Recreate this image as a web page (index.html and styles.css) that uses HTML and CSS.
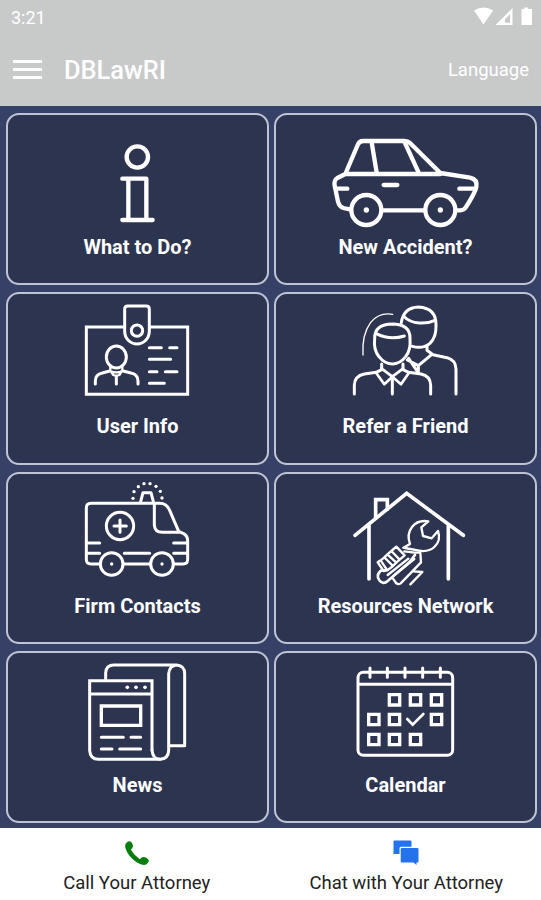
FILE: index.html
```html
<!DOCTYPE html>
<html lang="en">
<head>
    <meta charset="UTF-8">
    <meta name="viewport" content="width=device-width, initial-scale=1.0">
    <title>DBLawRI</title>
    <link rel="stylesheet" href="styles.css">
</head>
<body>
    <header class="header">
        <div class="status-bar">
            <span class="time">3:21</span>
            <svg class="status-icons" viewBox="0 0 60 20">
                <path d="M0 3.6Q9.5-2.6 19 3.6L9.5 17.4Z"/>
                <path fill-rule="evenodd" d="M21.5 18L38.5 1V18ZM31 15.7H36V7.2L31 12.2Z"/>
                <path d="M47.5 2H50.2V.5H54.2V2H58V18H47.5Z"/>
            </svg>
        </div>
        <div class="toolbar">
            <button class="menu" aria-label="Menu"><span></span><span></span><span></span></button>
            <h1>DBLawRI</h1>
            <a class="language" href="#">Language</a>
        </div>
    </header>

    <main class="grid">
        <a class="tile" href="#">
            <svg class="icon" viewBox="188 33 450 330">
                <g stroke-width="13">
                    <circle cx="411" cy="156" r="32"/>
                    <path d="M366 221H438V345M384 221V345M366 345H457"/>
                </g>
            </svg>
            <span class="label">What to Do?</span>
        </a>
        <a class="tile" href="#">
            <svg class="icon" viewBox="184 33 450 330">
                <g stroke-width="13">
                    <path d="M227 207L264 120Q269 108 280 108H405Q414 108 421 114L512 204L601 218Q624 223 620 246Q616 264 589 306Q583 316 572 316H563M341 316H462M240 313L221 309Q209 305 205 290L195 242Q192 226 203 219L227 207H512"/>
                    <path d="M306 112L321 203M405 112L447 203M200 251H233M569 251H618M342 240H383"/>
                    <circle cx="290" cy="315" r="45"/>
                    <circle cx="512" cy="315" r="45"/>
                </g>
                <circle class="dot" cx="290" cy="315" r="8"/>
                <circle class="dot" cx="512" cy="315" r="8"/>
            </svg>
            <span class="label">New Accident?</span>
        </a>
        <a class="tile" href="#">
            <svg class="icon" viewBox="-20 0 450 330">
                <g stroke-width="9">
                    <path stroke-linejoin="miter" d="M160 96H50V298H354V96H243"/>
                    <path d="M165 42Q165 33 174 33H230Q239 33 239 42V109A37 38 0 0 1 165 109Z"/>
                    <circle cx="202" cy="107" r="17"/>
                    <ellipse cx="140" cy="186" rx="30" ry="33"/>
                    <path d="M77 267V258Q77 238 98 234L120 228M160 228L184 234Q205 238 205 258V267M140 244V267"/>
                    <path stroke-width="7" d="M122 215V227L131 240Q140 244 149 240L158 227V215M122 228Q140 236 158 228"/>
                    <path d="M239 158H275M300 158H322M239 193H303M239 230H262M287 230H322M239 265H284"/>
                </g>
            </svg>
            <span class="label">User Info</span>
        </a>
        <a class="tile" href="#">
            <svg class="icon" viewBox="-12 0 450 330">
                <g stroke-width="9">
                    <path d="M119 130Q118 88 172 87Q226 88 225 130Q228 165 212 185Q195 207 172 207Q149 207 132 185Q115 165 119 130Z"/>
                    <path d="M124 116Q165 137 208 123"/>
                    <path d="M199 83Q205 38 250 36Q305 39 303 92Q304 127 285 145Q263 163 232 154M205 63Q225 83 252 84Q279 86 300 76"/>
                    <path d="M58 297V270Q59 243 88 237L124 232L140 224V207M204 207V224L221 232L258 237Q286 243 287 270V297M172 244V297"/>
                    <path stroke-width="8" d="M139 220L172 245L148 268L123 233M205 220L172 245L198 268L222 233"/>
                    <path d="M276 154V166L294 179L336 188Q362 195 363 222V297M217 195L250 212L287 181M250 212V231M221 190L248 231"/>
                </g>
                <path stroke-width="4" d="M84 180Q80 119 107 82Q133 51 173 58"/>
            </svg>
            <span class="label">Refer a Friend</span>
        </a>
        <a class="tile" href="#">
            <svg class="icon" viewBox="-20 0 450 330">
                <g stroke-width="9">
                    <path d="M92 267H64Q50 267 50 253V99Q50 85 64 85H270Q291 85 300 106L327 169L342 176Q354 183 354 197V253Q354 267 340 267H312M161 267H242"/>
                    <path d="M254 86V151Q256 172 278 172H328M213 80L220 53H244L251 80"/>
                    <path d="M53 204H90M53 235H90M164 235H240M312 204H352M312 235H352"/>
                    <circle cx="151" cy="153" r="41"/>
                    <path d="M151 135V172M133 153H170"/>
                    <circle cx="126" cy="267" r="34"/>
                    <circle cx="277" cy="267" r="34"/>
                </g>
                <g class="dot">
                    <circle cx="126" cy="267" r="5"/><circle cx="277" cy="267" r="5"/>
                    <circle cx="190" cy="70" r="5"/><circle cx="193" cy="50" r="5"/><circle cx="206" cy="35" r="5"/>
                    <circle cx="223" cy="26" r="5"/><circle cx="241" cy="26" r="5"/><circle cx="259" cy="34" r="5"/>
                    <circle cx="272" cy="49" r="5"/><circle cx="277" cy="69" r="5"/>
                </g>
            </svg>
            <span class="label">Firm Contacts</span>
        </a>
        <a class="tile" href="#">
            <svg class="icon" viewBox="-12 0 450 330">
                <g class="square" stroke-width="11">
                    <path d="M60 181L215 55L385 181M102 150V312M340 150V312"/>
                    <path d="M122 130V74H157V103"/>
                </g>
                <g stroke-width="7">
                    <path d="M205 218L225 207Q214 178 231 156Q248 134 280 139L259 157L264 183L290 190L309 168Q319 197 298 216Q280 232 252 227L210 219"/>
                    <path d="M208 229L238 233H256L258 262L197 325Q190 330 183 324L174 311"/>
                    <path stroke-width="8" d="M240 240L223 262L158 318Q145 330 133 316Q122 301 137 287L150 286"/>
                    <path d="M158 300L220 251M176 302L238 252M235 289L262 291L226 328"/>
                    <path d="M128 262L146 288L157 286L137 256ZM137 256L148 247L174 273L157 286M148 247L157 238L184 263L174 273M157 238L169 228L194 254L184 263M169 228L184 215L209 241L194 254"/>
                </g>
            </svg>
            <span class="label">Resources Network</span>
        </a>
        <a class="tile" href="#">
            <svg class="icon" viewBox="-20 12 450 330">
                <g stroke-width="9">
                    <path stroke-linejoin="miter" d="M247 300V92H60V302Q62 328 86 328H270M60 132H244"/>
                    <path d="M108 87V68Q110 45 132 45H321Q345 47 345 71V287H299M297 302V71Q299 47 321 45M247 300Q249 328 272 328Q296 326 297 302"/>
                    <path stroke-width="10" stroke-linejoin="miter" d="M95 168H213V226H95Z"/>
                    <path d="M95 262H161M184 262H213M95 297H127M150 297H213"/>
                </g>
                <g class="dot">
                    <circle cx="173" cy="112" r="5.5"/><circle cx="199" cy="112" r="5.5"/><circle cx="226" cy="112" r="5.5"/>
                </g>
            </svg>
            <span class="label">News</span>
        </a>
        <a class="tile" href="#">
            <svg class="icon" viewBox="-12 12 450 330">
                <g stroke-width="9">
                    <rect x="69" y="67" width="284" height="249" rx="16"/>
                    <path d="M70 103H352M105 54V82M157 54V82M210 54V82M263 54V82M316 54V82"/>
                </g>
                <g class="square" stroke-width="10">
                    <path d="M163 134H194V165H163ZM226 134H257V165H226ZM289 134H320V165H289Z"/>
                    <path d="M101 193H132V224H101ZM163 193H194V224H163ZM289 193H320V224H289Z"/>
                    <path d="M101 253H132V284H101ZM163 253H194V284H163ZM226 253H257V284H226Z"/>
                    <path stroke-width="8" d="M217 207L233 224L265 192"/>
                </g>
            </svg>
            <span class="label">Calendar</span>
        </a>
    </main>

    <footer class="footer">
        <a class="action" href="#">
            <svg class="action-icon" viewBox="0 0 26 26">
                <path fill="#067d0c" d="M2 3.2Q5.2-.6 7.6 2.6Q10.6 6.6 6.9 9.7Q10.2 15.2 15.8 19.2Q19 15.2 22.8 18.2Q27 20.6 22.6 24.2Q19 26.2 13 22.4Q4.5 17 1.8 9Q.4 5.5 2 3.2Z"/>
            </svg>
            <span>Call Your Attorney</span>
        </a>
        <a class="action" href="#">
            <svg class="action-icon" viewBox="0 0 26 26">
                <path fill="#2573ec" d="M1.5 .5H17.5Q18.5 .5 18.5 1.5V6.8H8Q6.5 6.8 6.5 8.3V14H1L.5 14.5V1.5Q.5 .5 1.5 .5Z"/>
                <path fill="#2573ec" d="M8.7 8H24.5Q25.5 8 25.5 9V21.5Q25.5 22.5 24.5 22.5H23.5V25L20.5 22.5H8.7Q7.7 22.5 7.7 21.5V9Q7.7 8 8.7 8Z"/>
            </svg>
            <span>Chat with Your Attorney</span>
        </a>
    </footer>
</body>
</html>
```
FILE: styles.css
```css
* {
    box-sizing: border-box;
}
body {
    margin: 0;
    height: 900px;
    display: flex;
    flex-direction: column;
    font-family: Roboto, sans-serif;
    background: #fff;
    overflow: hidden;
}
a {
    color: inherit;
    text-decoration: none;
}
.header {
    height: 106px;
    background: #c8caca;
    color: #fff;
}
.status-bar {
    display: flex;
    justify-content: space-between;
    height: 34px;
    padding: 7px 7px 0 11px;
}
.time {
    font-size: 18px;
    line-height: 21px;
}
.status-icons {
    width: 60px;
    height: 20px;
    fill: #fff;
}
.toolbar {
    display: flex;
    align-items: center;
    height: 71px;
    padding: 0 12px 0 13px;
}
.menu {
    display: flex;
    flex-direction: column;
    gap: 5px;
    width: 29px;
    padding: 0;
    border: 0;
    background: none;
}
.menu span {
    height: 3px;
    background: #fff;
}
h1 {
    flex: 1;
    margin: 0 0 0 22px;
    font-size: 25.4px;
    font-weight: 500;
}
.language {
    font-size: 18.5px;
}
.grid {
    flex: 1;
    display: grid;
    grid-template-columns: 1fr 1fr;
    grid-template-rows: repeat(4, 1fr);
    gap: 7px 5px;
    padding: 7px 4px 5px 6px;
    background: #374066;
}
.tile {
    display: flex;
    flex-direction: column;
    align-items: center;
    padding-top: 1px;
    border: 2px solid #bfc4d4;
    border-radius: 13px;
    background: #2d3450;
    color: #fff;
}
.icon {
    width: 150px;
    height: 110px;
    overflow: visible;
    fill: none;
    stroke: #fff;
    stroke-linecap: round;
    stroke-linejoin: round;
}
.dot {
    fill: #fff;
    stroke: none;
}
.square {
    stroke-linejoin: miter;
}
.label {
    margin-top: 9px;
    font-size: 20px;
    font-weight: 700;
    line-height: 24px;
}
.footer {
    display: flex;
    height: 72px;
    padding-left: 2px;
    color: #222;
}
.action {
    flex: 1;
    display: flex;
    flex-direction: column;
    align-items: center;
    padding-top: 12px;
    font-size: 18.5px;
    line-height: 24px;
}
.action-icon {
    width: 26px;
    height: 26px;
    margin-bottom: 5px;
}
```
